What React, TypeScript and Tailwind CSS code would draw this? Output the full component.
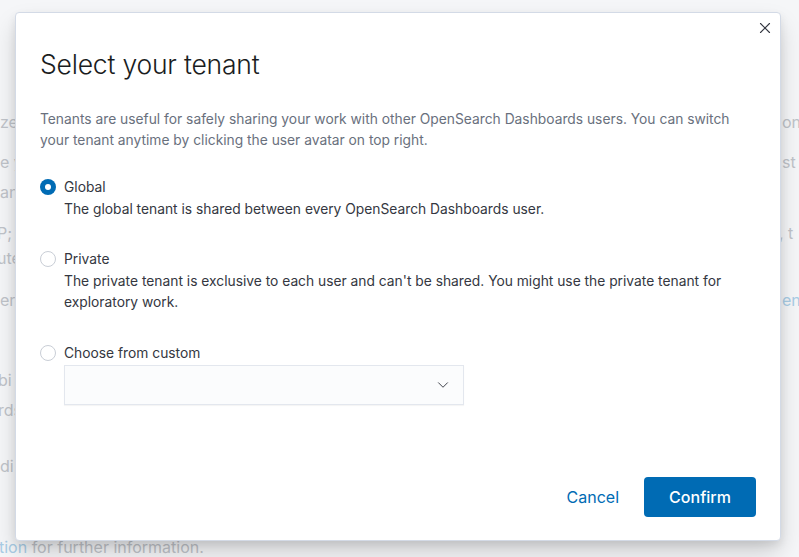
import { X, ChevronDown } from "lucide-react"

const bgRows = [
  { mt: "mt-[110px]", left: "ze", right: "on", shift: "ml-0" },
  { mt: "mt-[16px]", left: "e y", right: "st t", shift: "ml-0" },
  { mt: "mt-[6px]", left: "an", right: "", shift: "ml-0" },
  { mt: "mt-[17px]", left: "P;", right: ", t", shift: "ml-[-3px]" },
  { mt: "mt-px", left: "ute", right: "", shift: "ml-[-3px]" },
  { mt: "mt-[18px]", left: "er", right: "enc", shift: "ml-0", blue: true },
  { mt: "mt-[56px]", left: "bi", right: "", shift: "ml-[-2px]" },
  { mt: "mt-[6px]", left: "rds", right: "", shift: "ml-[-2px]" },
  { mt: "mt-[32px]", left: "di", right: "", shift: "ml-0" },
]

function Radio({ checked }: { checked?: boolean }) {
  return checked ? (
    <span className="w-4 h-4 rounded-full bg-[#006bb4] flex items-center justify-center shrink-0">
      <span className="block w-[6px] h-[6px] rounded-full bg-white" />
    </span>
  ) : (
    <span className="block w-4 h-4 rounded-full bg-white border border-[#c9ced6] shrink-0" />
  )
}

export default function App() {
  return (
    <div className="relative h-[557px] overflow-hidden bg-[#f5f6f8] text-[16px] text-[#bfc3c9]" style={{ fontFamily: "Inter, 'Noto Sans', sans-serif" }}>
      {/* page behind the modal */}
      <div className="flex flex-col">
        {bgRows.map((r, i) => (
          <div key={i} className={`${r.mt} flex h-6 leading-6 whitespace-nowrap`}>
            <span className={`w-[782px] shrink-0 ${r.shift}`}>{r.left}</span>
            <span className={r.blue ? "text-[#a9cde6]" : ""}>{r.right}</span>
          </div>
        ))}
        <div className="mt-[57px] h-6 leading-6 whitespace-nowrap ml-[-1px]">
          <span className="text-[#a9cde6]">tion</span> for further information.
        </div>
      </div>

      {/* modal */}
      <div className="absolute inset-0 flex items-center justify-center">
        <div className="relative w-[766px] h-[529px] mt-[-4px] ml-[-3px] bg-white border border-[#d3dae6] rounded-[4px] shadow-[0_12px_24px_-2px_rgba(0,0,0,0.18),0_4px_8px_rgba(0,0,0,0.08)] flex flex-col text-[#343741]">
          <button className="absolute top-[3px] right-[3px] w-6 h-6 flex items-center justify-center text-[#343741]">
            <X size={18} strokeWidth={1.5} />
          </button>

          <div className="px-6 pt-[33px]">
            <h1 className="text-[26.5px] leading-9 font-light text-[#1a1c21] tracking-[-0.2px]">Select your tenant</h1>
          </div>

          <div className="px-6 pt-[27px] text-[13.8px] leading-[21px] flex-1">
            <p className="text-[#69707d]">
              Tenants are useful for safely sharing your work with other OpenSearch Dashboards users. You can switch
              <br />
              your tenant anytime by clicking the user avatar on top right.
            </p>

            <div className="mt-[26px] flex gap-2">
              <div className="pt-[2px]"><Radio checked /></div>
              <div>
                <div>Global</div>
                <div className="mt-px">The global tenant is shared between every OpenSearch Dashboards user.</div>
              </div>
            </div>

            <div className="mt-[29px] flex gap-2">
              <div className="pt-[2px]"><Radio /></div>
              <div>
                <div>Private</div>
                <div className="mt-px">
                  The private tenant is exclusive to each user and can't be shared. You might use the private tenant for
                  <br />
                  exploratory work.
                </div>
              </div>
            </div>

            <div className="mt-[30px] flex gap-2">
              <div className="pt-[2px]"><Radio /></div>
              <div>
                <div>Choose from custom</div>
                <div className="mt-px w-[400px] h-10 bg-[#fbfcfd] border border-[#e3e7ee] shadow-[0_1px_1px_rgba(0,0,0,0.04)] flex items-center justify-end pr-[11px]">
                  <ChevronDown size={18} strokeWidth={1.25} className="text-[#343741]" />
                </div>
              </div>
            </div>
          </div>

          <div className="flex justify-end items-center gap-[25px] px-6 pb-[23px]">
            <button className="text-[16px] text-[#006bb4]">Cancel</button>
            <button className="w-[112px] h-10 rounded-[4px] bg-[#006bb4] text-white text-[16px] font-medium">Confirm</button>
          </div>
        </div>
      </div>
    </div>
  )
}
